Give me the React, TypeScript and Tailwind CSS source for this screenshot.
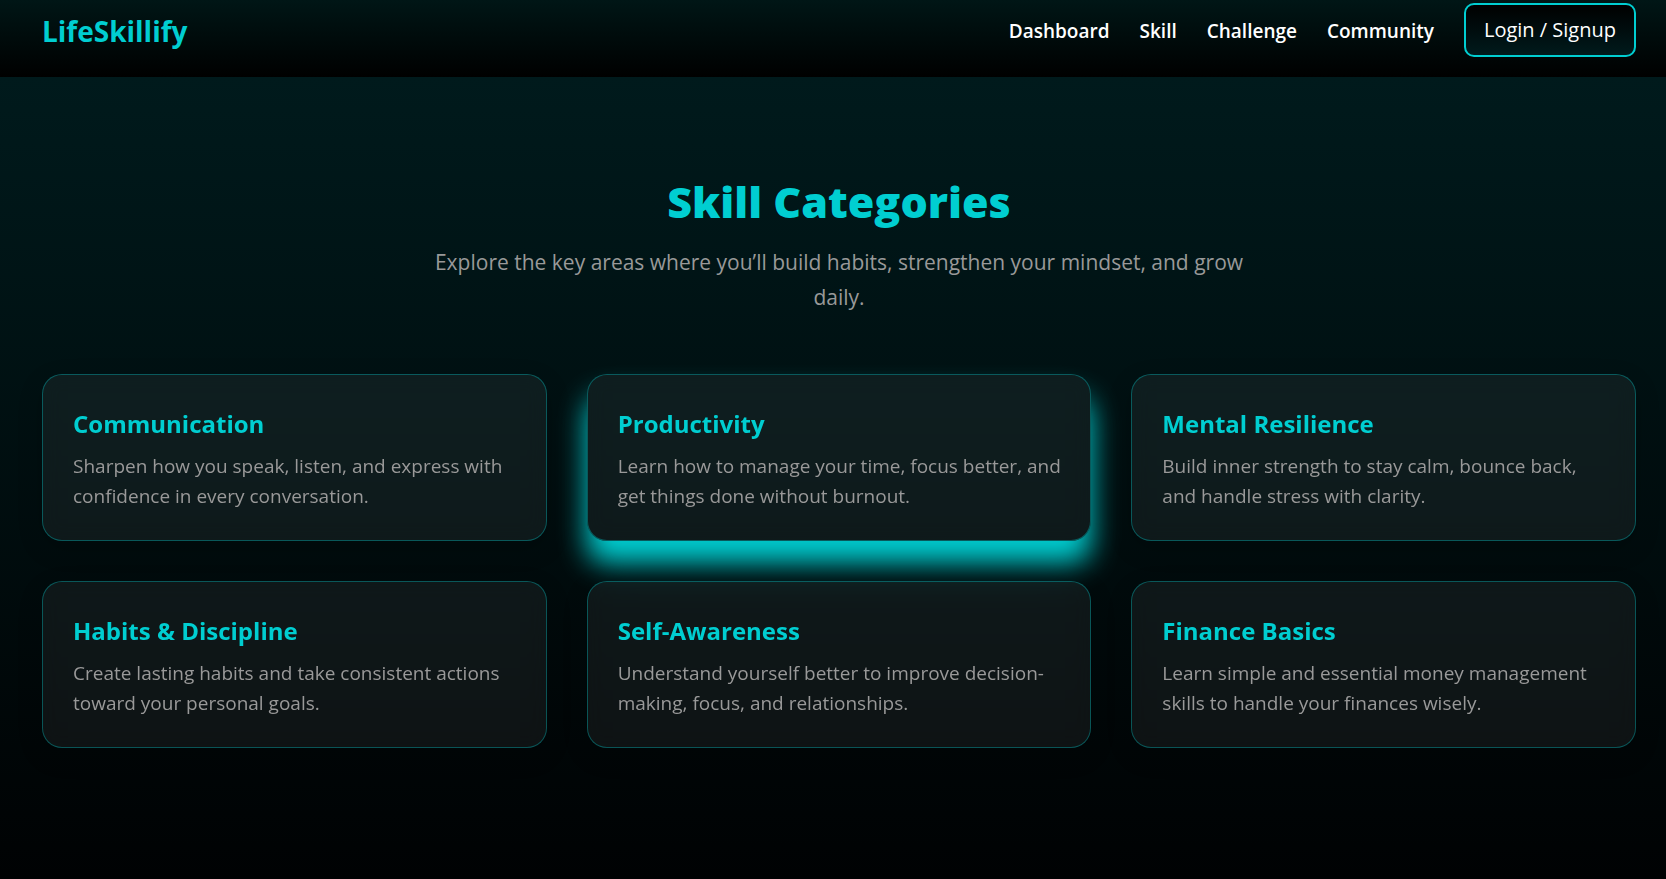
const links = ["Dashboard", "Skill", "Challenge", "Community"];

const categories = [
  { title: "Communication", text: "Sharpen how you speak, listen, and express with confidence in every conversation." },
  { title: "Productivity", text: "Learn how to manage your time, focus better, and get things done without burnout.", active: true },
  { title: "Mental Resilience", text: "Build inner strength to stay calm, bounce back, and handle stress with clarity." },
  { title: "Habits & Discipline", text: "Create lasting habits and take consistent actions toward your personal goals." },
  { title: "Self-Awareness", text: "Understand yourself better to improve decision-making, focus, and relationships." },
  { title: "Finance Basics", text: "Learn simple and essential money management skills to handle your finances wisely." },
];

function Header() {
  return (
    <header className="flex items-start justify-between bg-[linear-gradient(to_bottom,#001616,#000000)] pt-[3px] pr-[30px] pb-[18px] pl-[42px]">
      <a href="#" className="text-[28px] leading-[56px] font-bold text-[#00ced1]">
        LifeSkillify
      </a>
      <nav className="flex items-start gap-[30px]">
        {links.map((link) => (
          <a key={link} href="#" className="text-[19px] leading-[56px] font-semibold text-white">
            {link}
          </a>
        ))}
        <button
          type="button"
          className="h-[54px] rounded-[10px] border-2 border-[#00ced1] bg-[linear-gradient(to_bottom,#000000,#001a1c)] px-[18px] text-[20px] text-white"
        >
          Login / Signup
        </button>
      </nav>
    </header>
  );
}

function Card({ title, text, active }: { title: string; text: string; active?: boolean }) {
  return (
    <article
      className={`rounded-[20px] border border-[#00ced1]/35 bg-white/[0.055] pt-[31px] pr-6 pb-[29px] pl-[30px] backdrop-blur-[10px] ${
        active ? "shadow-[0_22px_28px_#00ced1]" : "shadow-[0_8px_24px_rgba(0,0,0,0.2)]"
      }`}
    >
      <h2 className="mb-2.5 text-2xl leading-[35px] font-bold text-[#00ced1]">{title}</h2>
      <p className="text-[19px] leading-[30px] text-[#999999]">{text}</p>
    </article>
  );
}

export default function App() {
  return (
    <div className="flex min-h-screen flex-col bg-black font-['Open_Sans','Noto_Sans',sans-serif]">
      <Header />
      <main className="grow bg-[linear-gradient(to_bottom,#001a1c,#000203)] pt-[95px] pr-[30px] pb-[100px] pl-[42px]">
        <div className="mx-auto mb-[59px] max-w-[850px] text-center">
          <h1 className="mb-[13px] text-[43px] leading-[60px] font-extrabold text-[#00ced1]">Skill Categories</h1>
          <p className="px-4 text-[21px] leading-[35px] text-[#999999]">
            Explore the key areas where you’ll build habits, strengthen your mindset, and grow daily.
          </p>
        </div>
        <section className="grid grid-cols-3 gap-10">
          {categories.map((c) => (
            <Card key={c.title} {...c} />
          ))}
        </section>
      </main>
    </div>
  );
}
